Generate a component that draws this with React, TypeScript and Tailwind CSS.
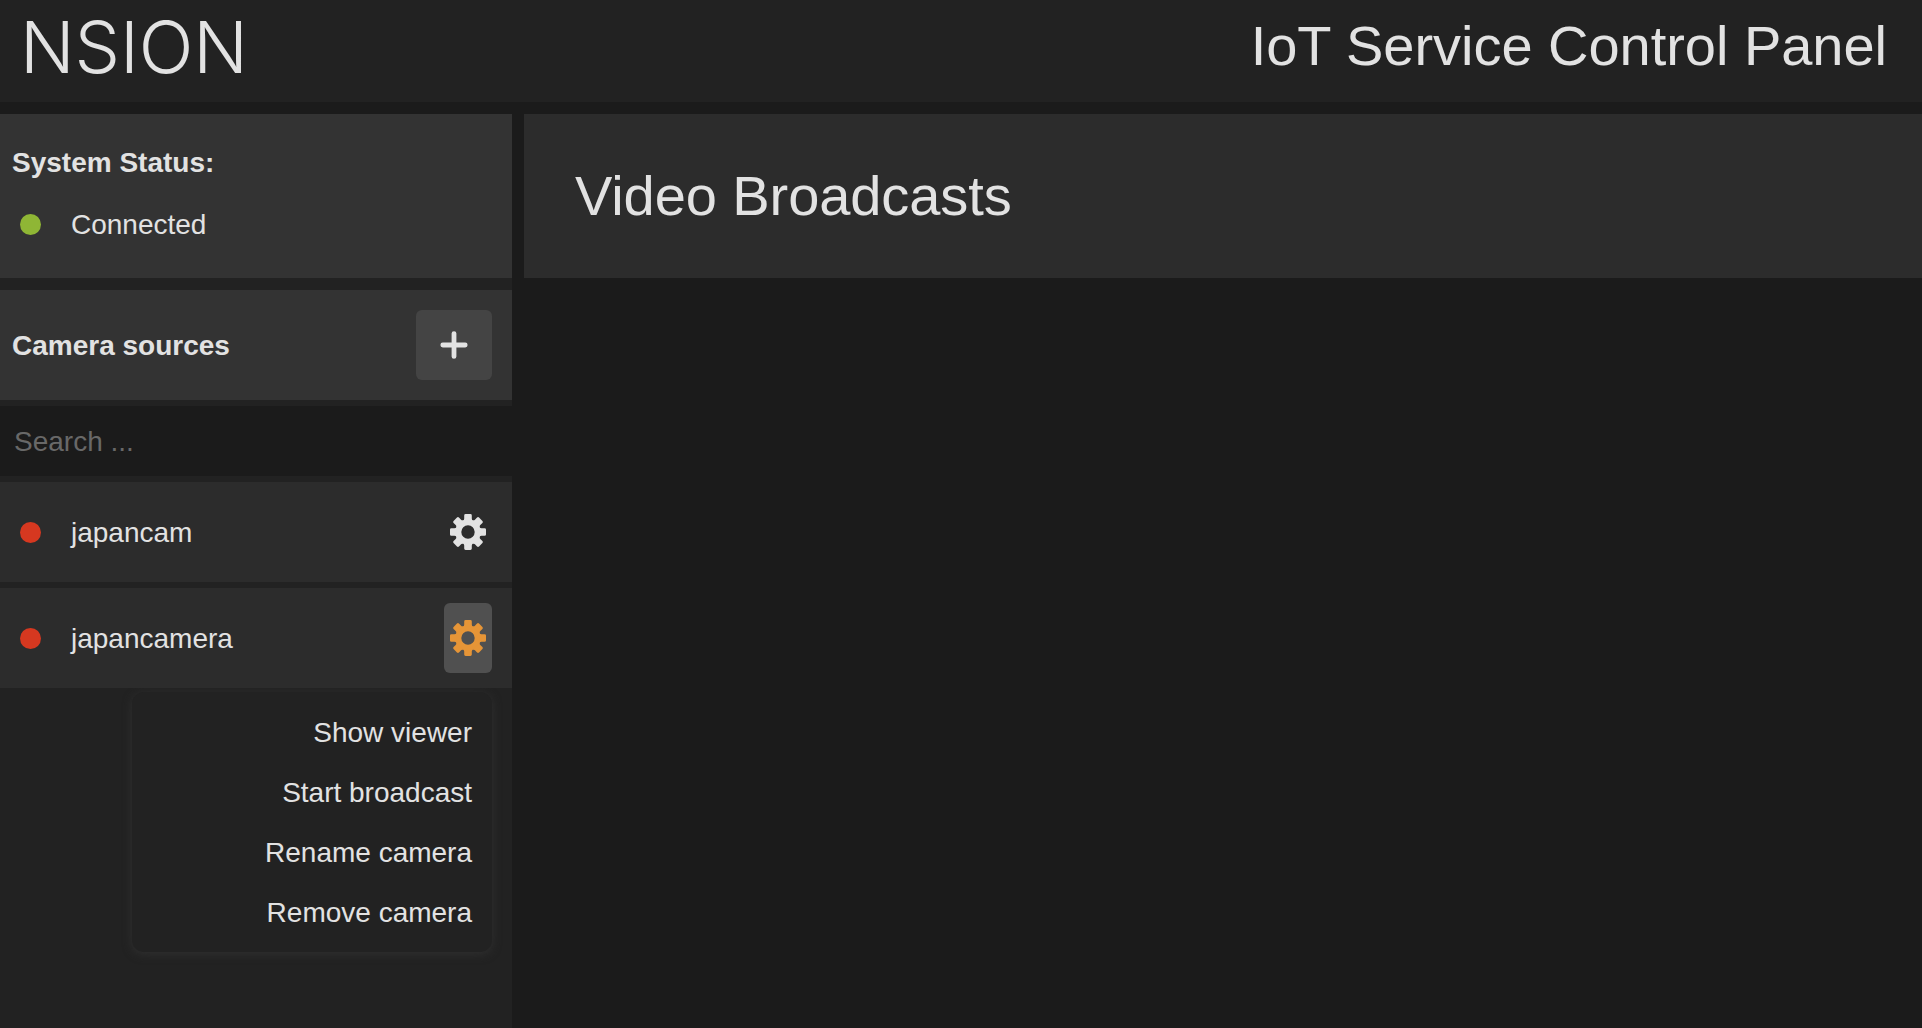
const TEETH = [0, 45, 90, 135, 180, 225, 270, 315];

function Gear() {
  return (
    <svg viewBox="-18 -18 36 36" className="size-9 overflow-visible" fill="currentColor">
      <circle r="9.7" fill="none" stroke="currentColor" strokeWidth="6" />
      {TEETH.map((a) => (
        <path
          key={a}
          transform={`rotate(${a})`}
          d="M-4.8 -11.4 Q-3.8 -12.4 -3.8 -13.6 V-16.6 Q-3.8 -18 -2.4 -18 H2.4 Q3.8 -18 3.8 -16.6 V-13.6 Q3.8 -12.4 4.8 -11.4Z"
        />
      ))}
    </svg>
  );
}

function Camera({ name, active }: { name: string; active?: boolean }) {
  return (
    <li className="flex h-[100px] items-center bg-[#2c2c2c] pr-5 pl-5">
      <span className="size-[21px] rounded-full bg-[#d63820]" />
      <span className="ml-[30px] flex-1 pt-0.5">{name}</span>
      <button
        className={
          active
            ? "flex h-[70px] w-12 items-center justify-center rounded-md bg-[#505050] text-[#e69537]"
            : "flex h-[70px] w-12 items-center justify-center rounded-md"
        }
      >
        <Gear />
      </button>
    </li>
  );
}

const ACTIONS = ["Show viewer", "Start broadcast", "Rename camera", "Remove camera"];

export default function App() {
  return (
    <div className="flex h-screen flex-col gap-3 overflow-hidden bg-[#1b1b1b] font-['Liberation_Sans',sans-serif] text-[28px] text-[#e2e2e2]">
      <header className="flex h-[102px] shrink-0 justify-between bg-[#222222] pr-[35px] pl-5">
        <div className="font-['Inter',sans-serif] text-[72px] leading-[94px] font-light tracking-[-0.1px]">NSION</div>
        <h1 className="text-[56px] leading-[91px] tracking-[-0.03px]">IoT Service Control Panel</h1>
      </header>
      <div className="flex min-h-0 flex-1 gap-3">
        <aside className="w-[512px] shrink-0 bg-[#222222]">
          <section className="h-[164px] bg-[#333333] pt-7 pl-3">
            <h2 className="leading-[42px] font-bold">System Status:</h2>
            <div className="mt-[18px] flex items-center pl-2 leading-[42px]">
              <span className="size-[21px] rounded-full bg-[#8fb635]" />
              <span className="ml-[30px] pt-0.5">Connected</span>
            </div>
          </section>
          <section className="mt-3 flex h-[110px] items-center justify-between bg-[#333333] pr-5 pl-3">
            <h2 className="pt-0.5 font-bold">Camera sources</h2>
            <button className="flex h-[70px] w-[76px] items-center justify-center rounded-md bg-[#444444]">
              <svg viewBox="0 0 28 28" className="size-7" stroke="currentColor" strokeWidth="4.8" strokeLinecap="round">
                <path d="M14 2.6V25.4M2.8 14H25.2" />
              </svg>
            </button>
          </section>
          <input
            placeholder="Search ..."
            className="my-1.5 block h-[70px] w-full bg-[#1b1b1b] px-3.5 pt-0.5 outline-none placeholder:text-[#686868]"
          />
          <ul className="flex flex-col gap-1.5">
            <Camera name="japancam" />
            <Camera name="japancamera" active />
          </ul>
          <ul className="mt-1 ml-[132px] w-[360px] rounded-xl bg-[#222222] pt-[11px] pr-5 pb-[9px] text-right leading-[60px] shadow-[0_2px_10px_#303030]">
            {ACTIONS.map((a) => (
              <li key={a}>{a}</li>
            ))}
          </ul>
        </aside>
        <main className="flex-1">
          <div className="flex h-[164px] items-center bg-[#2c2c2c] pl-[51px]">
            <h2 className="text-[56px] tracking-[-0.08px]">Video Broadcasts</h2>
          </div>
        </main>
      </div>
    </div>
  );
}
